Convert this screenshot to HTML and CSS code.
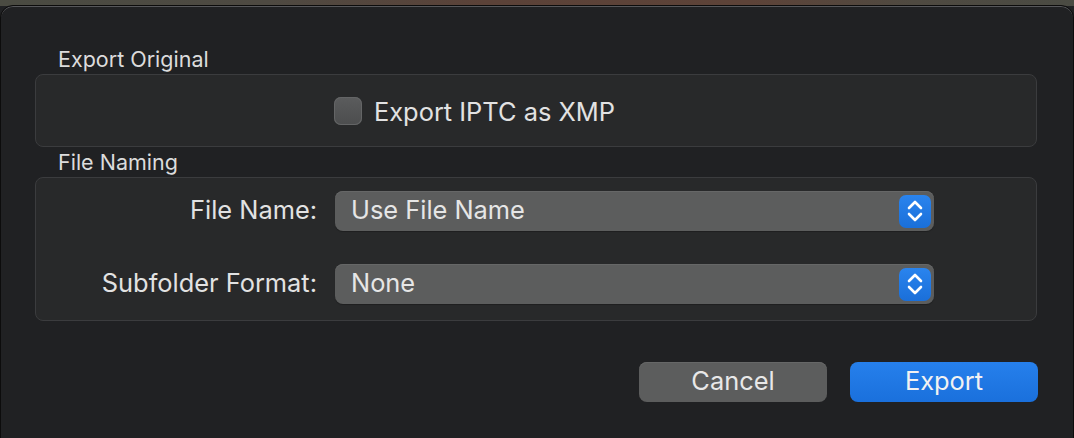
FILE: index.html
```html
<!DOCTYPE html>
<html lang="en">
<head>
<meta charset="utf-8">
<title>Export</title>
<link rel="stylesheet" href="styles.css">
</head>
<body>
<div class="backdrop">
  <div class="sheet">
    <section class="group">
      <h2 class="group-title">Export Original</h2>
      <div class="group-box box-original">
        <label class="check">
          <span class="check-box"></span>
          <span class="check-text">Export IPTC as XMP</span>
        </label>
      </div>
    </section>

    <section class="group">
      <h2 class="group-title">File Naming</h2>
      <div class="group-box box-naming">
        <span class="field-label">File Name:</span>
        <div class="popup">
          <span class="popup-value">Use File Name</span>
          <span class="stepper">
            <svg width="16" height="22" viewBox="0 0 16 22"><path d="M2 8 L8 2 L14 8 M2 14 L8 20 L14 14" fill="none" stroke="#fff" stroke-width="2.6" stroke-linecap="round" stroke-linejoin="round"/></svg>
          </span>
        </div>
        <span class="field-label">Subfolder Format:</span>
        <div class="popup">
          <span class="popup-value">None</span>
          <span class="stepper">
            <svg width="16" height="22" viewBox="0 0 16 22"><path d="M2 8 L8 2 L14 8 M2 14 L8 20 L14 14" fill="none" stroke="#fff" stroke-width="2.6" stroke-linecap="round" stroke-linejoin="round"/></svg>
          </span>
        </div>
      </div>
    </section>

    <div class="actions">
      <button class="btn btn-cancel" type="button"><span class="btn-text">Cancel</span></button>
      <button class="btn btn-default" type="button"><span class="btn-text">Export</span></button>
    </div>
  </div>
</div>
</body>
</html>
```

FILE: styles.css
```css
* { box-sizing: border-box; }

html, body {
  margin: 0;
  padding: 0;
  width: 1074px;
  height: 438px;
  overflow: hidden;
  background: #202123;
}

body {
  font-family: "Inter", "Noto Sans", sans-serif;
  color: #dedede;
}

/* blurred desktop peeking above the sheet */
.backdrop {
  height: 438px;
  padding-top: 5px;
  background: linear-gradient(90deg, #4a4b42 0%, #4e4a42 25%, #5b4238 45%, #5d4338 70%, #4f4a41 85%, #4a4b43 100%);
  background-size: 100% 6px;
  background-repeat: no-repeat;
  background-color: #202123;
}

.sheet {
  height: 450px;
  background: #202123;
  border: 1px solid #0c0c0c;
  border-radius: 13px;
  box-shadow: inset 0 1px 0 #56575a;
  padding: 39px 36px 0 34px;
  display: flex;
  flex-direction: column;
}

.group-title {
  margin: 0;
  padding-left: 23px;
  font-size: 21.5px;
  font-weight: 400;
  line-height: 28px;
  height: 29px;
  color: #dcdcdc;
}

.group-box {
  background: #28292a;
  border: 1px solid #3b3c3e;
  border-radius: 8px;
}

.box-original {
  height: 73px;
  display: flex;
  align-items: center;
  padding-left: 298px;
  margin-bottom: 1px;
}

.check {
  display: flex;
  align-items: center;
  gap: 12px;
}

.check-box {
  width: 28px;
  height: 28px;
  border-radius: 7px;
  background: linear-gradient(180deg, #5b5c5d 0%, #4c4d4e 100%);
  box-shadow: inset 0 0 0 1px #646566;
}

.check-text {
  font-size: 25.4px;
  line-height: 30px;
  color: #e2e2e2;
  padding-top: 2px;
}

.box-naming {
  height: 144px;
  display: grid;
  grid-template-columns: 281px 599px;
  column-gap: 18px;
  row-gap: 33px;
  align-content: start;
  align-items: center;
  padding-top: 13px;
}

.field-label {
  text-align: right;
  font-size: 25.4px;
  line-height: 30px;
  padding-bottom: 2px;
  color: #e2e2e2;
}

.popup {
  height: 40px;
  background: #5c5d5d;
  border-radius: 8px;
  box-shadow: inset 0 1px 0 #666767, 0 1px 1px rgba(0, 0, 0, 0.25);
  display: flex;
  align-items: center;
  justify-content: space-between;
  padding: 0 3px 0 16px;
}

.popup-value {
  font-size: 25.4px;
  line-height: 30px;
  padding-bottom: 2px;
  color: #e6e6e6;
}

.stepper {
  width: 32px;
  height: 33px;
  border-radius: 7px;
  background: linear-gradient(180deg, #2a84ee 0%, #1a6fd9 100%);
  display: flex;
  align-items: center;
  justify-content: center;
}

.actions {
  display: flex;
  justify-content: flex-end;
  gap: 24px;
  margin-top: 41px;
}

.btn {
  width: 188px;
  height: 40px;
  border: none;
  border-radius: 8px;
  font-family: inherit;
  font-size: 25.4px;
  line-height: 30px;
  color: #e8e8e8;
  padding: 0 0 2px;
  margin-right: -1px;
}

.btn-cancel {
  background: #5c5d5d;
  box-shadow: inset 0 1px 0 #666767;
}

.btn-default {
  background: linear-gradient(180deg, #2680ec 0%, #1a70dc 100%);
  color: #f2f2f2;
}
```
